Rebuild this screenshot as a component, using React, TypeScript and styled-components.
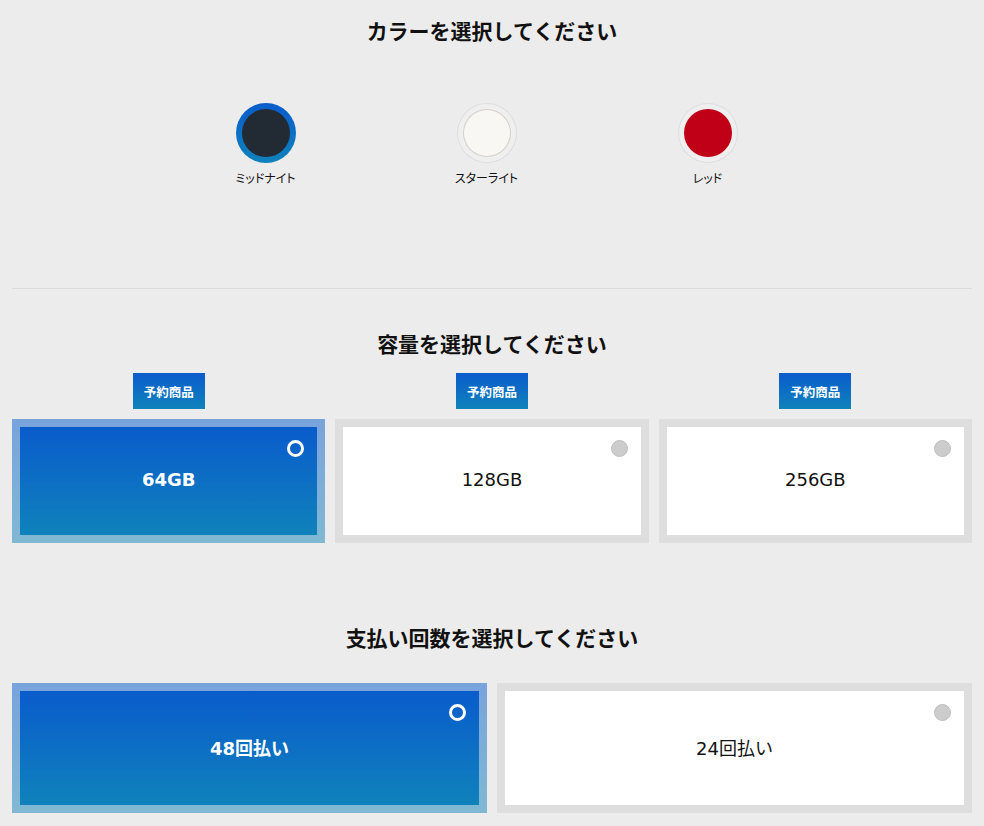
import React, { useState } from 'react'
import styled, { createGlobalStyle, css } from 'styled-components'

const GlobalStyle = createGlobalStyle`
  body {
    margin: 0;
    background: #ececec;
    font-family: "Noto Sans CJK JP", "Noto Sans", sans-serif;
    color: #111;
  }
`

const blueGradient = 'linear-gradient(180deg, #0a5ccc 0%, #0f82bb 100%)'

const Page = styled.div`
  padding: 0 12px 20px;
`

const SectionTitle = styled.h2<{ $top: number }>`
  margin: ${p => p.$top}px 0 0;
  font-size: 21px;
  line-height: 30px;
  font-weight: 700;
  text-align: center;
  color: #111;
`

const SwatchRow = styled.div`
  display: flex;
  justify-content: center;
  padding-right: 11px;
  margin-top: 58px;
`

const Swatch = styled.button`
  width: 221px;
  display: flex;
  flex-direction: column;
  align-items: center;
  background: none;
  border: none;
  padding: 0;
  cursor: pointer;
  font-family: inherit;
`

const Ring = styled.div<{ $active: boolean }>`
  width: 60px;
  height: 60px;
  border-radius: 50%;
  padding: 6px;
  box-sizing: border-box;
  ${p =>
    p.$active
      ? css`background: ${blueGradient};`
      : css`
          background: #efefef;
          box-shadow: inset 0 0 0 1px #dedede;
        `}
`

const Dot = styled.div<{ $color: string; $light?: boolean }>`
  width: 100%;
  height: 100%;
  border-radius: 50%;
  background: ${p => p.$color};
  ${p => p.$light && css`box-shadow: inset 0 0 0 1px #d3cfca;`}
`

const SwatchLabel = styled.span`
  margin-top: 7px;
  font-size: 12px;
  line-height: 16px;
  color: #111;
  font-feature-settings: "palt";
`

const Divider = styled.hr`
  margin: 102px 0 0;
  border: none;
  border-top: 1px solid #dcdcdc;
`

const CardGrid = styled.div<{ $cols: number; $top: number }>`
  display: grid;
  grid-template-columns: repeat(${p => p.$cols}, 1fr);
  gap: 10px;
  margin-top: ${p => p.$top}px;
`

const CardColumn = styled.div`
  display: flex;
  flex-direction: column;
  align-items: center;
  gap: 10px;
`

const Badge = styled.div`
  width: 72px;
  height: 36px;
  display: flex;
  align-items: center;
  justify-content: center;
  background: ${blueGradient};
  color: #fff;
  font-size: 12.5px;
  font-weight: 700;
`

const OptionCard = styled.button<{ $active: boolean; $height: number }>`
  width: 100%;
  padding: 8px;
  border: none;
  cursor: pointer;
  font-family: inherit;
  display: block;
  background: ${p => (p.$active ? 'linear-gradient(180deg, #79a3dc 0%, #80b8d3 100%)' : '#dedede')};

  & > div {
    position: relative;
    height: ${p => p.$height}px;
    display: flex;
    align-items: center;
    justify-content: center;
    padding-bottom: 3px;
    box-sizing: border-box;
    font-family: "DejaVu Sans", "Noto Sans CJK JP", sans-serif;
    font-size: 18px;
    font-weight: ${p => (p.$active ? 700 : 400)};
    color: ${p => (p.$active ? '#fff' : '#111')};
    background: ${p => (p.$active ? blueGradient : '#fff')};
  }
`

const Radio = styled.span<{ $active: boolean }>`
  position: absolute;
  top: 13px;
  right: 13px;
  width: 17px;
  height: 17px;
  border-radius: 50%;
  box-sizing: border-box;
  ${p =>
    p.$active
      ? css`border: 3px solid #fff;`
      : css`
          background: #cccccc;
          border: 1px solid #bfbfbf;
        `}
`

const colors = [
  { name: 'ミッドナイト', color: '#222a33' },
  { name: 'スターライト', color: '#f9f7f3', light: true },
  { name: 'レッド', color: '#c00016' },
]

const capacities = ['64GB', '128GB', '256GB']
const payments = ['48回払い', '24回払い']

export default function App() {
  const [color, setColor] = useState(0)
  const [capacity, setCapacity] = useState(0)
  const [payment, setPayment] = useState(0)

  return (
    <Page>
      <GlobalStyle />
      <SectionTitle $top={15}>カラーを選択してください</SectionTitle>
      <SwatchRow>
        {colors.map((c, i) => (
          <Swatch key={c.name} onClick={() => setColor(i)}>
            <Ring $active={color === i}>
              <Dot $color={c.color} $light={c.light} />
            </Ring>
            <SwatchLabel>{c.name}</SwatchLabel>
          </Swatch>
        ))}
      </SwatchRow>
      <Divider />

      <SectionTitle $top={39}>容量を選択してください</SectionTitle>
      <CardGrid $cols={3} $top={15}>
        {capacities.map((c, i) => (
          <CardColumn key={c}>
            <Badge>予約商品</Badge>
            <OptionCard $active={capacity === i} $height={108} onClick={() => setCapacity(i)}>
              <div>
                {c}
                <Radio $active={capacity === i} />
              </div>
            </OptionCard>
          </CardColumn>
        ))}
      </CardGrid>

      <SectionTitle $top={79}>支払い回数を選択してください</SectionTitle>
      <CardGrid $cols={2} $top={31}>
        {payments.map((p, i) => (
          <OptionCard key={p} $active={payment === i} $height={114} onClick={() => setPayment(i)}>
            <div>
              {p}
              <Radio $active={payment === i} />
            </div>
          </OptionCard>
        ))}
      </CardGrid>
    </Page>
  )
}
